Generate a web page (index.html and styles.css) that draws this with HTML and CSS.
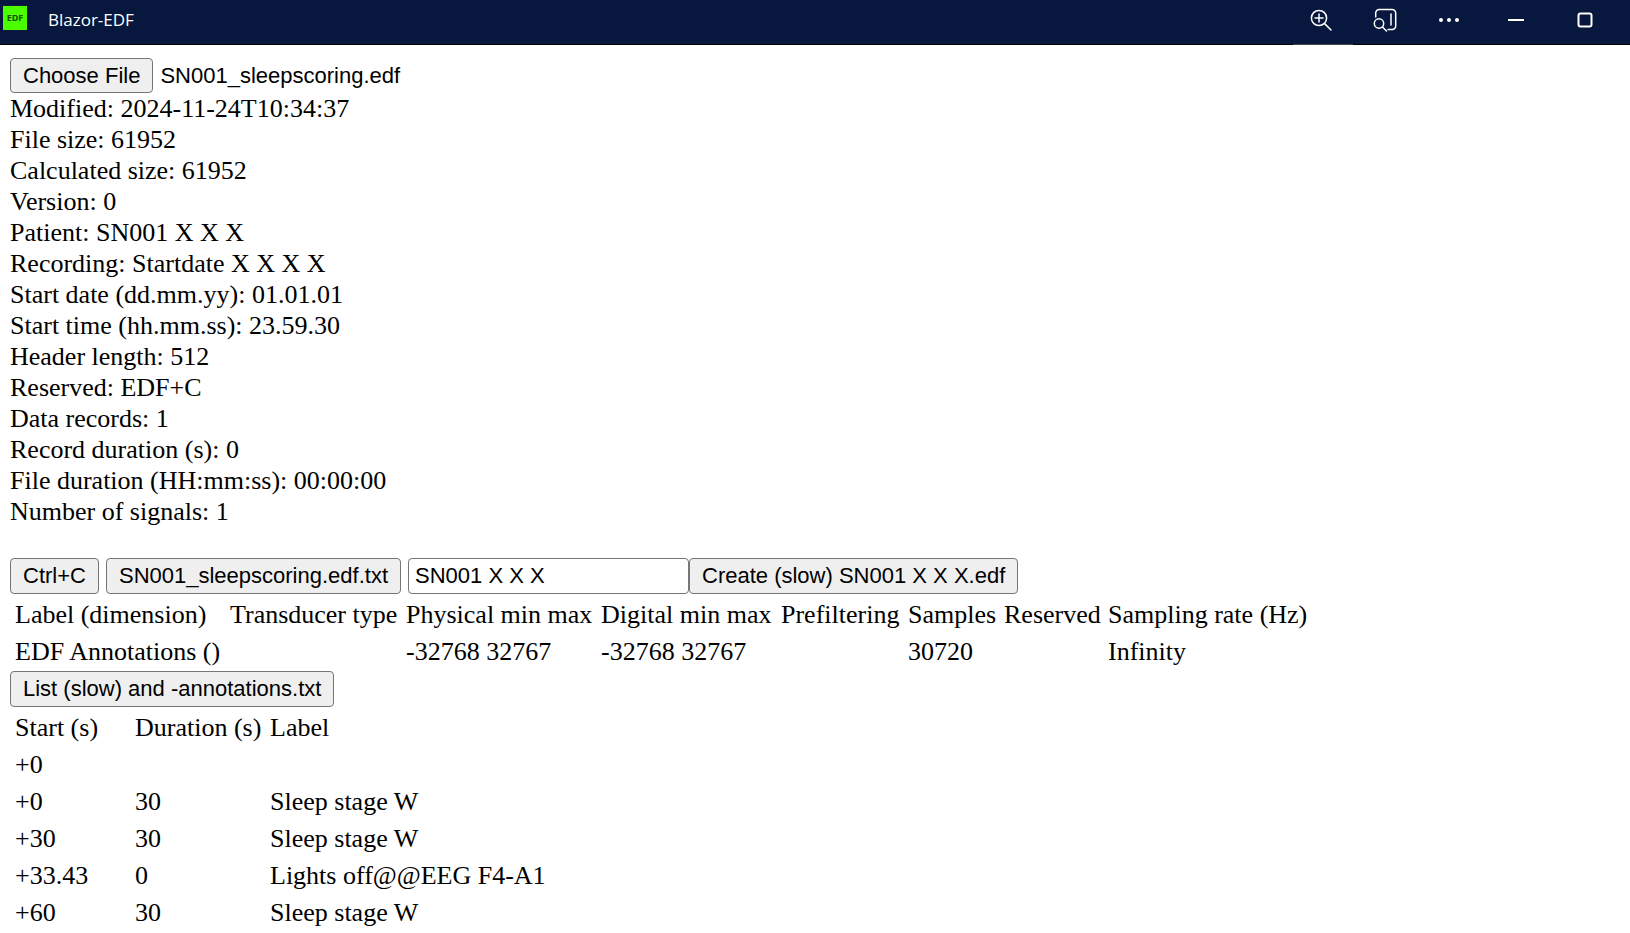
FILE: index.html
```html
<!DOCTYPE html>
<html lang="en">
<head>
<meta charset="utf-8">
<title>Blazor-EDF</title>
<link rel="stylesheet" href="styles.css">
</head>
<body>
<header class="titlebar">
  <span class="app-icon">EDF</span>
  <span class="app-title">Blazor-EDF</span>
  <button class="tool zoomed" type="button" aria-label="Zoom">
    <svg width="24" height="24" viewBox="0 0 24 24"><circle cx="10" cy="10" r="7.6"/><path d="M10 6v8M6 10h8M15.6 15.6L22 22"/></svg>
  </button>
  <button class="tool" type="button" aria-label="Search in page">
    <svg width="24" height="24" viewBox="0 0 24 24"><path d="M2.7 9V5a3.5 3.5 0 0 1 3.5-3.5h13A3.5 3.5 0 0 1 22.700 5v13a3.500 3.500 0 0 1-3.500 3.500H15M18 6v11"/><circle cx="6" cy="15.500" r="4.700"/><path d="M9.400 19L13.500 23"/></svg>
  </button>
  <button class="tool" type="button" aria-label="More">
    <svg class="solid" width="24" height="24" viewBox="0 0 24 24"><circle cx="4" cy="12" r="2"/><circle cx="12" cy="12" r="2"/><circle cx="20" cy="12" r="2"/></svg>
  </button>
  <button class="window-control" type="button" aria-label="Minimize">
    <svg class="bold" width="16" height="16" viewBox="0 0 16 16"><path d="M0.500 8h15"/></svg>
  </button>
  <button class="window-control" type="button" aria-label="Maximize">
    <svg class="bold" width="16" height="16" viewBox="0 0 16 16"><rect x="1.500" y="1.500" width="13" height="13" rx="2"/></svg>
  </button>
</header>
<main class="content">
  <input class="file" id="file" type="file" accept=".edf" aria-label="EDF file">
  <div class="details">
    <div>Modified: 2024-11-24T10:34:37</div>
    <div>File size: 61952</div>
    <div>Calculated size: 61952</div>
    <div>Version: 0</div>
    <div>Patient: SN001 X X X</div>
    <div>Recording: Startdate X X X X</div>
    <div>Start date (dd.mm.yy): 01.01.01</div>
    <div>Start time (hh.mm.ss): 23.59.30</div>
    <div>Header length: 512</div>
    <div>Reserved: EDF+C</div>
    <div>Data records: 1</div>
    <div>Record duration (s): 0</div>
    <div>File duration (HH:mm:ss): 00:00:00</div>
    <div>Number of signals: 1</div>
  </div>
  <div class="actions">
    <button class="btn" type="button">Ctrl+C</button>
    <button class="btn" type="button">SN001_sleepscoring.edf.txt</button>
    <div class="create">
      <input class="field" type="text" value="SN001 X X X" aria-label="Patient">
      <button class="btn" type="button">Create (slow) SN001 X X X.edf</button>
    </div>
  </div>
  <table class="grid signals">
    <colgroup><col class="label"><col class="transducer"><col class="physical"><col class="digital"><col class="prefiltering"><col class="samples"><col class="reserved"><col></colgroup>
    <thead>
      <tr><th>Label (dimension)</th><th>Transducer type</th><th>Physical min max</th><th>Digital min max</th><th>Prefiltering</th><th>Samples</th><th>Reserved</th><th>Sampling rate (Hz)</th></tr>
    </thead>
    <tbody>
      <tr><td>EDF Annotations ()</td><td></td><td>-32768 32767</td><td>-32768 32767</td><td></td><td>30720</td><td></td><td>Infinity</td></tr>
    </tbody>
  </table>
  <button class="btn" type="button">List (slow) and -annotations.txt</button>
  <table class="grid">
    <colgroup><col class="start"><col class="duration"><col></colgroup>
    <thead>
      <tr><th>Start (s)</th><th>Duration (s)</th><th>Label</th></tr>
    </thead>
    <tbody>
      <tr><td>+0</td><td></td><td></td></tr>
      <tr><td>+0</td><td>30</td><td>Sleep stage W</td></tr>
      <tr><td>+30</td><td>30</td><td>Sleep stage W</td></tr>
      <tr><td>+33.43</td><td>0</td><td>Lights off@@EEG F4-A1</td></tr>
      <tr><td>+60</td><td>30</td><td>Sleep stage W</td></tr>
    </tbody>
  </table>
</main>
<script src="app.js"></script>
</body>
</html>
```
FILE: styles.css
```css
* {
  box-sizing: border-box;
}

body {
  margin: 0;
  background: #fff;
  color: #000;
  font: 26px/31px "Liberation Serif", "Times New Roman", serif;
}

.titlebar {
  display: flex;
  align-items: center;
  height: 45px;
  padding: 0 11px 4px 3px;
  border-bottom: 1px solid #000;
  background: #07173d;
  color: #fff;
}

.app-icon {
  width: 24px;
  margin: 0 21px 4px 0;
  background: #4cff00;
  color: #145000;
  font: bold 9px/24px "Open Sans", sans-serif;
  text-align: center;
}

.app-title {
  margin-right: auto;
  font: 17px/24px "Open Sans", sans-serif;
}

.tool,
.window-control {
  position: relative;
  display: flex;
  align-items: center;
  justify-content: center;
  width: 64px;
  height: 40px;
  padding: 0;
  border: 0;
  background: none;
}

.window-control {
  width: 69px;
}

.zoomed::after {
  content: "";
  position: absolute;
  left: 4px;
  bottom: -5px;
  width: 60px;
  height: 1px;
  background: #444;
}

svg {
  fill: none;
  stroke: #fff;
  stroke-width: 1.5;
  stroke-linecap: round;
}

.bold {
  stroke-width: 2;
}

.solid {
  fill: #fff;
  stroke: none;
}

.content {
  display: flex;
  flex-direction: column;
  align-items: flex-start;
  padding: 13px 10px 0;
}

.file,
.field,
.btn {
  height: 36px;
  margin: 0;
  color: #000;
  font: 22px/26px "Liberation Sans", Arial, sans-serif;
}

.file {
  height: 35px;
  width: 480px;
}

.btn,
.file::file-selector-button {
  padding: 0 12px;
  border: 1px solid #767676;
  border-radius: 4px;
  background: #efefef;
  color: #000;
  white-space: nowrap;
}

.file::file-selector-button {
  height: 35px;
  margin-right: 7px;
  font: inherit;
}

.field {
  width: 281px;
  padding: 0 6px;
  border: 1px solid #767676;
  border-radius: 4px;
  background: #fff;
}

.details {
  margin-bottom: 31px;
}

.actions {
  display: flex;
  gap: 7px;
}

.create {
  display: flex;
}

.grid {
  border-spacing: 3px 2px;
}

.grid th,
.grid td {
  height: 35px;
  padding: 2px;
  font-weight: normal;
  text-align: left;
  white-space: nowrap;
}

.grid th {
  height: 36px;
}

.label {
  width: 212px;
}

.transducer {
  width: 173px;
}

.physical {
  width: 192px;
}

.digital {
  width: 177px;
}

.prefiltering {
  width: 124px;
}

.samples {
  width: 93px;
}

.reserved {
  width: 101px;
}

.start {
  width: 117px;
}

.duration {
  width: 132px;
}
```
FILE: app.js
```js
const selected = new DataTransfer();
selected.items.add(new File([], "SN001_sleepscoring.edf"));
document.getElementById("file").files = selected.files;
```
